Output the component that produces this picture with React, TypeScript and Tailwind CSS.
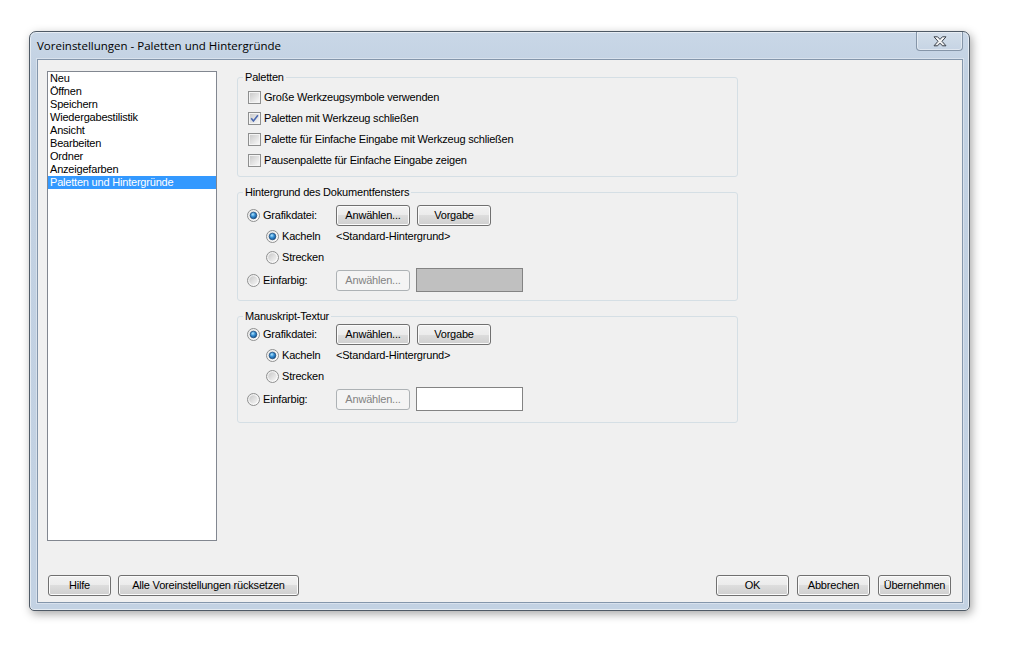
import React from "react";

function Defs() {
  return (
    <svg className="absolute w-0 h-0" width="0" height="0">
      <defs>
        <linearGradient id="cbInner" x1="0" y1="0" x2="1" y2="1">
          <stop offset="0" stopColor="#cbcbcb" />
          <stop offset="1" stopColor="#f7f7f7" />
        </linearGradient>
        <linearGradient id="rbOuter" x1="0" y1="0" x2="1" y2="1">
          <stop offset="0" stopColor="#e9e9e9" />
          <stop offset="1" stopColor="#ffffff" />
        </linearGradient>
        <linearGradient id="rbInner" x1="0" y1="0" x2="1" y2="1">
          <stop offset="0" stopColor="#c9c9c9" />
          <stop offset="1" stopColor="#f6f6f6" />
        </linearGradient>
        <radialGradient id="rbDot" cx="0.4" cy="0.35" r="0.7">
          <stop offset="0" stopColor="#b4e6fd" />
          <stop offset="0.45" stopColor="#3a92d6" />
          <stop offset="1" stopColor="#0e4a86" />
        </radialGradient>
        <linearGradient id="closeBg" x1="0" y1="0" x2="0" y2="1">
          <stop offset="0" stopColor="#ffffff" />
          <stop offset="1" stopColor="#e8e8e8" />
        </linearGradient>
      </defs>
    </svg>
  );
}

function Checkbox({ checked }: { checked?: boolean }) {
  return (
    <svg width="13" height="13" viewBox="0 0 13 13" className="shrink-0 block">
      <rect x="0.5" y="0.5" width="12" height="12" fill="#f4f4f4" stroke="#8e8f8f" />
      <rect x="2" y="2" width="9" height="9" fill="url(#cbInner)" />
      {checked && (
        <path d="M3.2 6.2 L5.4 8.9 L9.9 3.3" fill="none" stroke="#4a68b0" strokeWidth="1.6" />
      )}
    </svg>
  );
}

function Radio({ checked }: { checked?: boolean }) {
  return (
    <svg width="13" height="13" viewBox="0 0 13 13" className="shrink-0 block">
      <circle cx="6.5" cy="6.5" r="6" fill="url(#rbOuter)" stroke="#8e8f8f" />
      <circle cx="6.5" cy="6.5" r="4.2" fill="url(#rbInner)" />
      {checked && <circle cx="6.5" cy="6.5" r="3.3" fill="url(#rbDot)" stroke="#1b4a7c" strokeWidth="0.7" />}
    </svg>
  );
}

function Btn({
  children,
  w,
  disabled,
}: {
  children: React.ReactNode;
  w: string;
  disabled?: boolean;
}) {
  return disabled ? (
    <div
      className={`${w} h-[21px] shrink-0 rounded-[3px] border border-[#adb2b5] bg-[#f4f4f4] text-[#838383] flex items-center justify-center leading-[13px]`}
    >
      {children}
    </div>
  ) : (
    <div
      className={`${w} h-[21px] shrink-0 rounded-[3px] border border-[#707070] bg-[linear-gradient(#f2f2f2,#ebebeb_50%,#dddddd_50%,#cfcfcf)] shadow-[inset_0_0_0_1px_#fbfbfb] flex items-center justify-center leading-[13px]`}
    >
      {children}
    </div>
  );
}

function CheckRow({ label, checked }: { label: string; checked?: boolean }) {
  return (
    <div className="h-[21px] flex items-center">
      <Checkbox checked={checked} />
      <span className="ml-[3px] leading-[13px]">{label}</span>
    </div>
  );
}

function Group({
  title,
  children,
  pt,
  pb,
  className = "",
}: {
  title: string;
  children: React.ReactNode;
  pt: string;
  pb: string;
  className?: string;
}) {
  return (
    <fieldset className={`m-0 p-0 min-w-0 border border-[#d5dfe5] rounded-[3px] ${className}`}>
      <legend className="ml-[5px] px-[2px] leading-[13px]">{title}</legend>
      <div className={`${pt} ${pb}`}>{children}</div>
    </fieldset>
  );
}

function BackgroundGroup({
  title,
  swatch,
  pt,
  pb,
  className,
}: {
  title: string;
  swatch: string;
  pt: string;
  pb: string;
  className?: string;
}) {
  return (
    <Group title={title} pt={pt} pb={pb} className={className}>
      <div className="pl-[9px]">
        <div className="h-[22px] flex items-center">
          <div className="w-[89px] flex items-center shrink-0">
            <Radio checked />
            <span className="ml-[3px] leading-[13px]">Grafikdatei:</span>
          </div>
          <Btn w="w-[74px]">Anwählen...</Btn>
          <div className="w-[7px]" />
          <Btn w="w-[74px]">Vorgabe</Btn>
        </div>
        <div className="h-[21px] flex items-center">
          <div className="w-[89px] flex items-center shrink-0 pl-[19px]">
            <Radio checked />
            <span className="ml-[3px] leading-[13px]">Kacheln</span>
          </div>
          <span className="leading-[13px]">&lt;Standard-Hintergrund&gt;</span>
        </div>
        <div className="h-[21px] flex items-center">
          <div className="w-[89px] flex items-center shrink-0 pl-[19px]">
            <Radio />
            <span className="ml-[3px] leading-[13px]">Strecken</span>
          </div>
        </div>
        <div className="h-[24px] flex items-center">
          <div className="w-[89px] flex items-center shrink-0">
            <Radio />
            <span className="ml-[3px] leading-[13px]">Einfarbig:</span>
          </div>
          <Btn w="w-[74px]" disabled>
            Anwählen...
          </Btn>
          <div className="w-[6px]" />
          <div className={`w-[107px] h-[24px] border border-[#838383] ${swatch}`} />
        </div>
      </div>
    </Group>
  );
}

const items = [
  "Neu",
  "Öffnen",
  "Speichern",
  "Wiedergabestilistik",
  "Ansicht",
  "Bearbeiten",
  "Ordner",
  "Anzeigefarben",
  "Paletten und Hintergründe",
];

export default function App() {
  return (
    <div className="relative w-[1019px] h-[649px] bg-white overflow-hidden font-['Liberation_Sans',Arial,sans-serif] text-[11px] tracking-[-0.2px] text-black">
      <Defs />
      <div className="ml-[29px] mt-[31px] w-[941px] h-[580px] rounded-t-[7px] rounded-b-[5px] border border-[#4f5a66] bg-[linear-gradient(#c9d7e7,#c2d1e2_40px,#c3d2e3)] shadow-[2px_3px_10px_rgba(0,0,0,0.35),inset_0_0_0_1px_rgba(255,255,255,0.55)] flex flex-col">
        <div className="h-[27px] flex items-start shrink-0">
          <div className="flex-1 pl-[7px] pt-[6px] font-['Open_Sans',sans-serif] text-[11.5px] tracking-normal leading-[16px] text-black">
            Voreinstellungen - Paletten und Hintergründe
          </div>
          <div className="mr-[6px] w-[47px] h-[19px] rounded-b-[4px] border border-t-0 border-[#8595a8] bg-[linear-gradient(#d3deea,#c6d4e4)] shadow-[inset_0_0_0_1px_rgba(255,255,255,0.45)] flex items-center justify-center">
            <svg width="14" height="11" viewBox="0 0 14 11">
              <polygon
                points="1,0.8 4.6,0.8 7,3.4 9.4,0.8 13,0.8 9,5.3 13,9.8 9.4,9.8 7,7.2 4.6,9.8 1,9.8 5,5.3"
                fill="url(#closeBg)"
                stroke="#3a414b"
                strokeWidth="1"
                strokeLinejoin="round"
              />
            </svg>
          </div>
        </div>
        <div className="ml-[7px] mr-[6px] h-[544px] border border-[#8496ab] shadow-[0_0_0_1px_rgba(255,255,255,0.35)] bg-[#f0f0f0] flex flex-col">
          <div className="flex items-start pt-[11px] pl-[9px]">
            <div className="w-[170px] h-[470px] border border-[#828790] bg-white shrink-0">
              {items.map((it, i) =>
                i === items.length - 1 ? (
                  <div key={it} className="h-[13px] leading-[13px] pl-[2px] bg-[#3399ff] text-white">
                    {it}
                  </div>
                ) : (
                  <div key={it} className="h-[13px] leading-[13px] pl-[2px]">
                    {it}
                  </div>
                )
              )}
            </div>
            <div className="ml-[20px] w-[501px] flex flex-col">
              <Group title="Paletten" pt="pt-[3px]" pb="pb-[5px]">
                <div className="pl-[10px]">
                  <CheckRow label="Große Werkzeugsymbole verwenden" />
                  <CheckRow label="Paletten mit Werkzeug schließen" checked />
                  <CheckRow label="Palette für Einfache Eingabe mit Werkzeug schließen" />
                  <CheckRow label="Pausenpalette für Einfache Eingabe zeigen" />
                </div>
              </Group>
              <BackgroundGroup
                className="mt-[9px]"
                title="Hintergrund des Dokumentfensters"
                swatch="bg-[#c0c0c0]"
                pt="pt-[5px]"
                pb="pb-[8px]"
              />
              <BackgroundGroup
                className="mt-[9px]"
                title="Manuskript-Textur"
                swatch="bg-white"
                pt="pt-[0px]"
                pb="pb-[11px]"
              />
            </div>
          </div>
          <div className="mt-auto pl-[10px] pr-[11px] pb-[6px] flex items-center">
            <Btn w="w-[63px]">Hilfe</Btn>
            <div className="w-[7px]" />
            <Btn w="w-[181px]">Alle Voreinstellungen rücksetzen</Btn>
            <div className="flex-1" />
            <Btn w="w-[73px]">OK</Btn>
            <div className="w-[8px]" />
            <Btn w="w-[73px]">Abbrechen</Btn>
            <div className="w-[8px]" />
            <Btn w="w-[73px]">Übernehmen</Btn>
          </div>
        </div>
      </div>
    </div>
  );
}
